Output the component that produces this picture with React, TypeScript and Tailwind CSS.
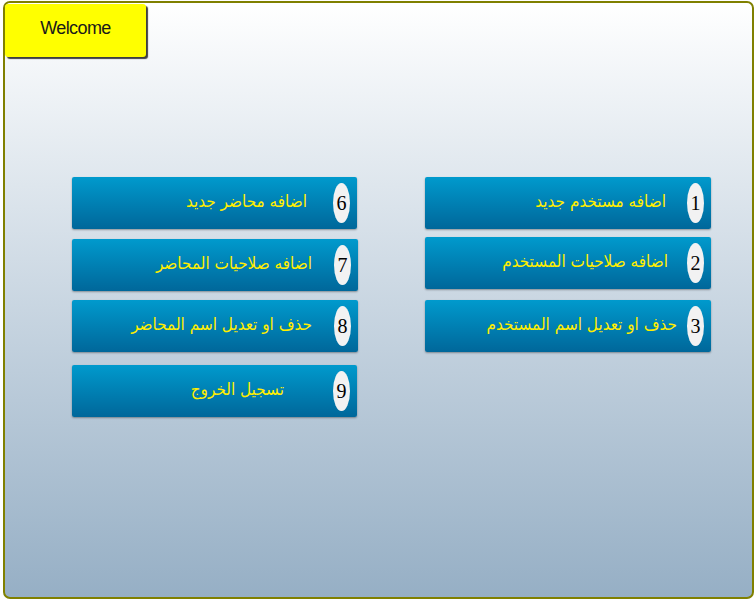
const items = {
  right: [
    { n: "1", label: "اضافه مستخدم جديد", pr: "pr-[21px]", mt: "mt-0", w: "w-[286px]" },
    { n: "2", label: "اضافه صلاحيات المستخدم", pr: "pr-[19px]", mt: "mt-[8px]", w: "w-[286px]" },
    { n: "3", label: "حذف او تعديل اسم المستخدم", pr: "pr-[10px]", mt: "mt-[11px]", w: "w-[286px]" },
  ],
  left: [
    { n: "6", label: "اضافه محاضر جديد", pr: "pr-[26px]", mt: "mt-0", w: "w-[285px]" },
    { n: "7", label: "اضافه صلاحيات المحاضر", pr: "pr-[22px]", mt: "mt-[10px]", w: "w-[286px]" },
    { n: "8", label: "حذف او تعديل اسم المحاضر", pr: "pr-[22px]", mt: "mt-[9px]", w: "w-[286px]" },
    { n: "9", label: "تسجيل الخروج", pr: "pr-[49px]", mt: "mt-[13px]", w: "w-[285px]" },
  ],
}

type Item = { n: string; label: string; pr: string; mt: string; w: string }

const MenuButton = ({ item }: { item: Item }) => {
  return (
    <button
      className={`${item.w} ${item.mt} h-[52px] flex items-center justify-start flex-row-reverse rounded-[2px] bg-gradient-to-b from-[#009acd] to-[#00679a] shadow-[0_1px_2px_rgba(0,0,0,0.35)]`}
    >
      <span className="w-[17px] h-[40px] mr-[7px] rounded-[50%] bg-[#f2f2f2] flex items-center justify-center text-black text-[20px] font-['Liberation_Serif',serif]">
        {item.n}
      </span>
      <span
        dir="rtl"
        className={`${item.pr} -mt-[3px] text-[#ffee00] text-[17px] font-['DejaVu_Sans_Condensed','DejaVu_Sans',sans-serif] whitespace-nowrap`}
      >
        {item.label}
      </span>
    </button>
  )
}

export default function App() {
  return (
    <div className="w-[756px] h-[600px] bg-white pl-[3px] pt-[1px]">
      <div className="relative w-[751px] h-[598px] border-2 border-[#808000] rounded-[7px] bg-gradient-to-b from-white to-[#96afc5]">
        <div className="absolute left-0 top-[1px] w-[141px] h-[53px] bg-[#ffff00] rounded-[3px] shadow-[2px_2px_1px_rgba(0,0,0,0.75)] flex items-center justify-center">
          <span className="text-[18px] tracking-[-0.6px] text-[#1a1a1a] font-['Liberation_Sans',sans-serif] -mt-[5px]">Welcome</span>
        </div>

        <div className="flex pt-[174px] pl-[67px]">
          <div className="flex flex-col">
            {items.left.map((it) => (
              <MenuButton key={it.n} item={it} />
            ))}
          </div>
          <div className="flex flex-col ml-[67px]">
            {items.right.map((it) => (
              <MenuButton key={it.n} item={it} />
            ))}
          </div>
        </div>
      </div>
    </div>
  )
}
